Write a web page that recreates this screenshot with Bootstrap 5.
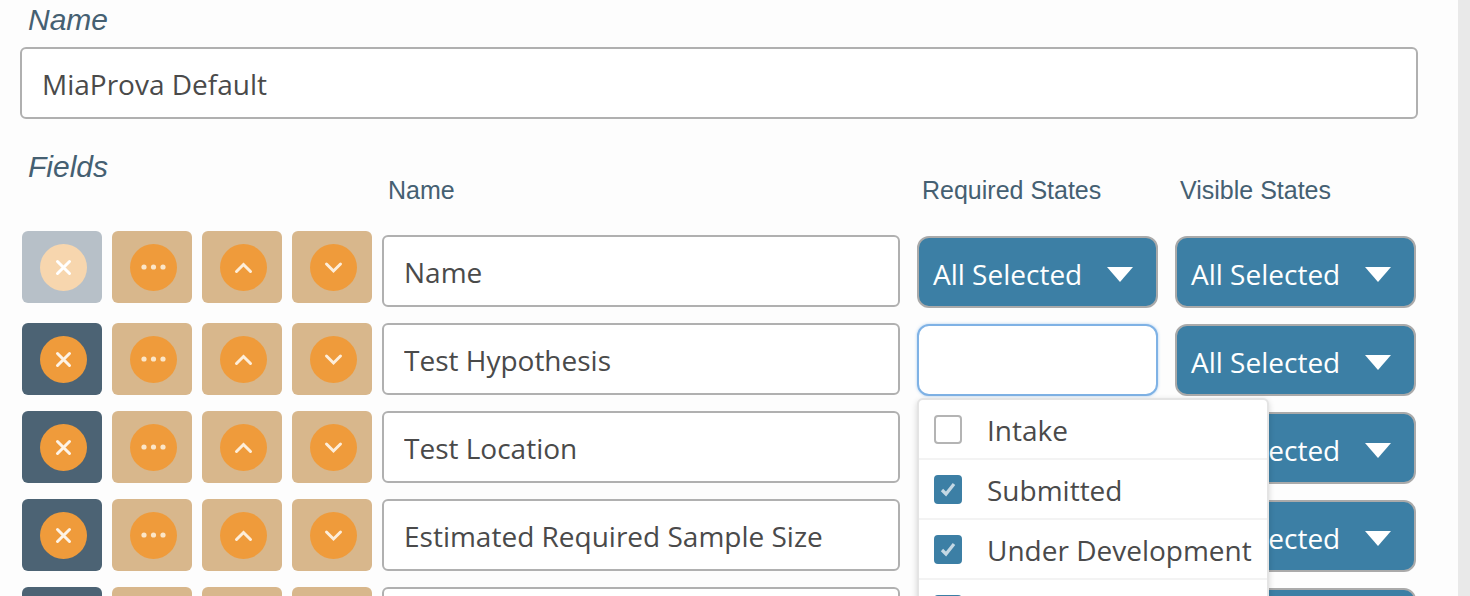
<!DOCTYPE html>
<html lang="en">
<head>
<meta charset="utf-8">
<title>Fields</title>
<link rel="stylesheet" href="https://cdn.jsdelivr.net/npm/bootstrap@5.3.0/dist/css/bootstrap.min.css">
<style>
html,body{height:596px;overflow:hidden;background:#fdfdfd}
body{font-family:"Open Sans",sans-serif;color:#4a4a4a}
.page-wrap{height:596px;overflow:hidden}
.main-pane{width:1458px;padding:0 40px 0 20px;flex:none}
.side-band{flex:1;background:#e9e9e9}
.sec-label{font-family:"Liberation Sans",sans-serif;font-style:italic;font-size:30px;line-height:40px;color:#456072;margin:0 0 0 8px;font-weight:400}
.name-label{height:47px;padding-top:0}
.name-input.form-control,.field-input.form-control{font-family:"Open Sans",sans-serif;font-size:28px;color:#4a4a4a;border:2px solid #b0b0b0;border-radius:6px;box-shadow:none;background:#fff}
.name-input.form-control{height:72px;padding:2px 20px 0;width:1398px}
.head-row{height:112px;position:relative}
.fields-title{padding-top:28px}
.col-head{font-family:"Liberation Sans",sans-serif;font-size:25px;line-height:30px;color:#456072;padding-top:56px;white-space:nowrap}
.h-name{margin-left:368px;width:534px}
.h-req{width:258px}
.field-row{height:88px;padding-left:2px;gap:10px}
.row-one{height:92px}
.sq-btn{width:80px;height:72px;padding:0 0 0 2px;border:0;border-radius:6px;background:#d8b78c;display:flex;align-items:center;justify-content:center;flex:none}
.sq-btn.sq-del{background:#4c6374}
.sq-btn.sq-off{background:#b7c0c8}
.sq-btn svg{width:47px;height:47px;display:block}
.sq-low svg{margin-top:1px}
.field-input.form-control{width:518px;height:72px;padding:2px 20px 0;flex:none}
.row-one .field-input.form-control{margin-top:4px}
.sel-box{width:241px;height:72px;margin-top:1px;border:2px solid #aaa;border-radius:12px;background:#3c7fa5;color:#fff;font-size:28px;padding:0 14px;flex:none;display:flex;align-items:center;justify-content:space-between;overflow:hidden;white-space:nowrap}
.row-one .sel-box{margin-top:5px}
.sel-box span{padding-top:3px}
.sel-box.sel-open{background:#fff;border-color:#7fb2e5;box-shadow:0 0 3px rgba(90,160,230,.5)}
.sel-first{margin-left:7px}
.sel-next{margin-left:7px}
.caret-down{width:0;height:0;border-left:13px solid transparent;border-right:13px solid transparent;border-top:15px solid #fff;margin-right:9px;margin-top:5px;flex:none}
.sel-wrap{position:relative;margin-left:7px;width:241px;flex:none}
.opt-menu{position:absolute;left:0;top:75px;width:352px;background:#fff;border:2px solid #e4e4e4;border-radius:6px;box-shadow:0 2px 6px rgba(0,0,0,.16);z-index:5;padding:0;margin:0;list-style:none}
.opt-item{height:60px;display:flex;align-items:center;padding-left:15px;border-bottom:2px solid #f3f3f3;font-size:28px;color:#4a4a4a;white-space:nowrap}
.opt-text{padding-top:2px}
.opt-box{width:28px;height:29px;border:2px solid #b4b4b4;border-radius:4px;background:#fff;margin-right:25px;flex:none;display:flex;align-items:center;justify-content:center}
.opt-box.opt-on{background:#3c7fa5;border-color:#3c7fa5}
.opt-box svg{width:20px;height:20px;display:block}
</style>
</head>
<body>
<div class="d-flex page-wrap">
  <main class="main-pane">
    <div class="name-label"><h6 class="sec-label">Name</h6></div>
    <input class="form-control name-input" type="text" value="MiaProva Default" aria-label="Name">
    <div class="d-flex head-row">
      <h6 class="sec-label fields-title position-absolute">Fields</h6>
      <div class="col-head h-name">Name</div>
      <div class="col-head h-req">Required States</div>
      <div class="col-head">Visible States</div>
    </div>

    <div class="d-flex field-row row-one">
      <button class="sq-btn sq-off" type="button" aria-label="Remove"><svg viewBox="0 0 47 47"><circle cx="23.5" cy="23.5" r="23.5" fill="#f7d6ae"/><path d="M17.5 17.5L29.5 29.5M29.5 17.5L17.5 29.5" stroke="#fff" stroke-width="3" stroke-linecap="round"/></svg></button>
      <button class="sq-btn sq-low" type="button" aria-label="More"><svg viewBox="0 0 47 47"><circle cx="23.5" cy="23.5" r="23.5" fill="#ef9b3b"/><circle cx="14" cy="23" r="2.6" fill="#fbe6c8"/><circle cx="23.5" cy="23" r="2.6" fill="#fbe6c8"/><circle cx="33" cy="23" r="2.6" fill="#fbe6c8"/></svg></button>
      <button class="sq-btn" type="button" aria-label="Move up"><svg viewBox="0 0 47 47"><circle cx="23.5" cy="23.5" r="23.5" fill="#ef9b3b"/><path d="M16.5 27.5L23.5 20.5L30.5 27.5" fill="none" stroke="#fdeeda" stroke-width="3" stroke-linecap="round"/></svg></button>
      <button class="sq-btn sq-low" type="button" aria-label="Move down"><svg viewBox="0 0 47 47"><circle cx="23.5" cy="23.5" r="23.5" fill="#ef9b3b"/><path d="M16.5 20L23.5 27L30.5 20" fill="none" stroke="#fdeeda" stroke-width="3" stroke-linecap="round"/></svg></button>
      <input class="form-control field-input" type="text" value="Name" aria-label="Field name">
      <div class="sel-box sel-first"><span>All Selected</span><i class="caret-down"></i></div>
      <div class="sel-box sel-next"><span>All Selected</span><i class="caret-down"></i></div>
    </div>

    <div class="d-flex field-row">
      <button class="sq-btn sq-del" type="button" aria-label="Remove"><svg viewBox="0 0 47 47"><circle cx="23.5" cy="23.5" r="23.5" fill="#ef9b3b"/><path d="M17.5 17.5L29.5 29.5M29.5 17.5L17.5 29.5" stroke="#fdf3e6" stroke-width="3" stroke-linecap="round"/></svg></button>
      <button class="sq-btn sq-low" type="button" aria-label="More"><svg viewBox="0 0 47 47"><circle cx="23.5" cy="23.5" r="23.5" fill="#ef9b3b"/><circle cx="14" cy="23" r="2.6" fill="#fbe6c8"/><circle cx="23.5" cy="23" r="2.6" fill="#fbe6c8"/><circle cx="33" cy="23" r="2.6" fill="#fbe6c8"/></svg></button>
      <button class="sq-btn" type="button" aria-label="Move up"><svg viewBox="0 0 47 47"><circle cx="23.5" cy="23.5" r="23.5" fill="#ef9b3b"/><path d="M16.5 27.5L23.5 20.5L30.5 27.5" fill="none" stroke="#fdeeda" stroke-width="3" stroke-linecap="round"/></svg></button>
      <button class="sq-btn sq-low" type="button" aria-label="Move down"><svg viewBox="0 0 47 47"><circle cx="23.5" cy="23.5" r="23.5" fill="#ef9b3b"/><path d="M16.5 20L23.5 27L30.5 20" fill="none" stroke="#fdeeda" stroke-width="3" stroke-linecap="round"/></svg></button>
      <input class="form-control field-input" type="text" value="Test Hypothesis" aria-label="Field name">
      <div class="sel-wrap">
        <div class="sel-box sel-open"></div>
        <ul class="opt-menu">
          <li class="opt-item"><span class="opt-box"></span><span class="opt-text">Intake</span></li>
          <li class="opt-item"><span class="opt-box opt-on"><svg viewBox="0 0 20 20"><path d="M4 11L8 15L16 5" fill="none" stroke="#c4d8e4" stroke-width="3.2"/></svg></span><span class="opt-text">Submitted</span></li>
          <li class="opt-item"><span class="opt-box opt-on"><svg viewBox="0 0 20 20"><path d="M4 11L8 15L16 5" fill="none" stroke="#c4d8e4" stroke-width="3.2"/></svg></span><span class="opt-text">Under Development</span></li>
          <li class="opt-item"><span class="opt-box opt-on"></span></li>
        </ul>
      </div>
      <div class="sel-box sel-next"><span>All Selected</span><i class="caret-down"></i></div>
    </div>

    <div class="d-flex field-row">
      <button class="sq-btn sq-del" type="button" aria-label="Remove"><svg viewBox="0 0 47 47"><circle cx="23.5" cy="23.5" r="23.5" fill="#ef9b3b"/><path d="M17.5 17.5L29.5 29.5M29.5 17.5L17.5 29.5" stroke="#fdf3e6" stroke-width="3" stroke-linecap="round"/></svg></button>
      <button class="sq-btn sq-low" type="button" aria-label="More"><svg viewBox="0 0 47 47"><circle cx="23.5" cy="23.5" r="23.5" fill="#ef9b3b"/><circle cx="14" cy="23" r="2.6" fill="#fbe6c8"/><circle cx="23.5" cy="23" r="2.6" fill="#fbe6c8"/><circle cx="33" cy="23" r="2.6" fill="#fbe6c8"/></svg></button>
      <button class="sq-btn" type="button" aria-label="Move up"><svg viewBox="0 0 47 47"><circle cx="23.5" cy="23.5" r="23.5" fill="#ef9b3b"/><path d="M16.5 27.5L23.5 20.5L30.5 27.5" fill="none" stroke="#fdeeda" stroke-width="3" stroke-linecap="round"/></svg></button>
      <button class="sq-btn sq-low" type="button" aria-label="Move down"><svg viewBox="0 0 47 47"><circle cx="23.5" cy="23.5" r="23.5" fill="#ef9b3b"/><path d="M16.5 20L23.5 27L30.5 20" fill="none" stroke="#fdeeda" stroke-width="3" stroke-linecap="round"/></svg></button>
      <input class="form-control field-input" type="text" value="Test Location" aria-label="Field name">
      <div class="sel-box sel-first"><span>All Selected</span><i class="caret-down"></i></div>
      <div class="sel-box sel-next"><span>All Selected</span><i class="caret-down"></i></div>
    </div>

    <div class="d-flex field-row">
      <button class="sq-btn sq-del" type="button" aria-label="Remove"><svg viewBox="0 0 47 47"><circle cx="23.5" cy="23.5" r="23.5" fill="#ef9b3b"/><path d="M17.5 17.5L29.5 29.5M29.5 17.5L17.5 29.5" stroke="#fdf3e6" stroke-width="3" stroke-linecap="round"/></svg></button>
      <button class="sq-btn sq-low" type="button" aria-label="More"><svg viewBox="0 0 47 47"><circle cx="23.5" cy="23.5" r="23.5" fill="#ef9b3b"/><circle cx="14" cy="23" r="2.6" fill="#fbe6c8"/><circle cx="23.5" cy="23" r="2.6" fill="#fbe6c8"/><circle cx="33" cy="23" r="2.6" fill="#fbe6c8"/></svg></button>
      <button class="sq-btn" type="button" aria-label="Move up"><svg viewBox="0 0 47 47"><circle cx="23.5" cy="23.5" r="23.5" fill="#ef9b3b"/><path d="M16.5 27.5L23.5 20.5L30.5 27.5" fill="none" stroke="#fdeeda" stroke-width="3" stroke-linecap="round"/></svg></button>
      <button class="sq-btn sq-low" type="button" aria-label="Move down"><svg viewBox="0 0 47 47"><circle cx="23.5" cy="23.5" r="23.5" fill="#ef9b3b"/><path d="M16.5 20L23.5 27L30.5 20" fill="none" stroke="#fdeeda" stroke-width="3" stroke-linecap="round"/></svg></button>
      <input class="form-control field-input" type="text" value="Estimated Required Sample Size" aria-label="Field name">
      <div class="sel-box sel-first"><span>All Selected</span><i class="caret-down"></i></div>
      <div class="sel-box sel-next"><span>All Selected</span><i class="caret-down"></i></div>
    </div>

    <div class="d-flex field-row">
      <button class="sq-btn sq-del" type="button" aria-label="Remove"></button>
      <button class="sq-btn" type="button" aria-label="More"></button>
      <button class="sq-btn" type="button" aria-label="Move up"></button>
      <button class="sq-btn" type="button" aria-label="Move down"></button>
      <input class="form-control field-input" type="text" value="" aria-label="Field name">
      <div class="sel-box sel-first"></div>
      <div class="sel-box sel-next"></div>
    </div>
  </main>
  <div class="side-band"></div>
</div>
<script src="https://cdn.jsdelivr.net/npm/bootstrap@5.3.0/dist/js/bootstrap.bundle.min.js"></script>
</body>
</html>
